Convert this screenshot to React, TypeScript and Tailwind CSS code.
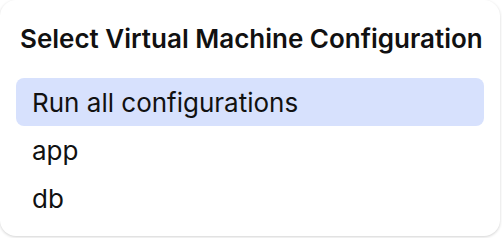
const items = ["Run all configurations", "app", "db"];

export default function App() {
  return (
    <div className="h-[238px] w-[502px] bg-white font-['Inter',sans-serif]">
      <div className="flex h-[236px] w-[500px] flex-col rounded-2xl bg-white shadow-[0_1px_3px_rgba(0,0,0,0.18)]">
        <h2 className="whitespace-nowrap px-5 pt-[23px] text-[26px] font-semibold leading-8 text-[#111]">
          Select Virtual Machine Configuration
        </h2>
        <ul className="mt-[23px] flex flex-col px-4">
          {items.map((item, i) => (
            <li
              key={item}
              className={
                "flex h-12 items-center rounded-lg px-4 text-[26px] text-[#111] " +
                (i === 0 ? "bg-[#d7e1fd]" : "")
              }
            >
              {item}
            </li>
          ))}
        </ul>
      </div>
    </div>
  );
}
